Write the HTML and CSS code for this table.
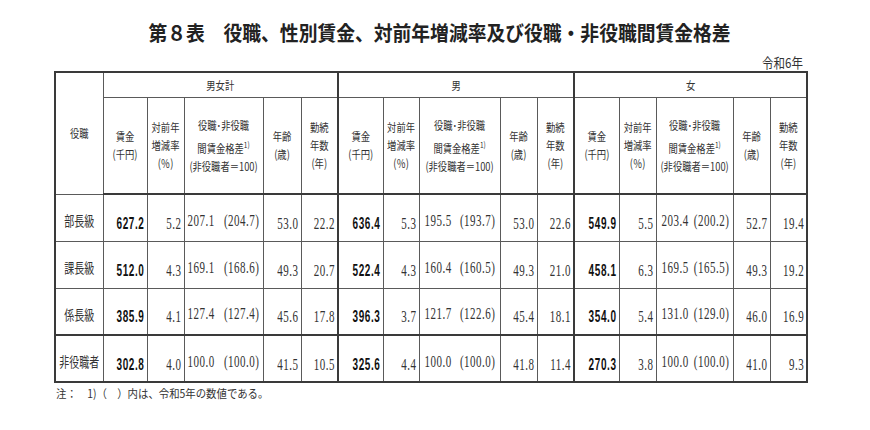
FILE: index.html
```
<!DOCTYPE html>
<html lang="ja">
<head>
<meta charset="utf-8">
<title>第８表</title>
<link rel="stylesheet" href="styles.css">
</head>
<body>
<div class="page">
  <h1 class="title"><span class="tt">第８表　役職、性別賃金、対前年増減率及び役職・非役職間賃金格差</span></h1>
  <div class="year"><span class="ys">令和6年</span></div>
  <table class="tbl">
    <colgroup>
      <col class="w48">
      <col class="w44"><col class="w37"><col class="w79"><col class="w38"><col class="w37">
      <col class="w45"><col class="w36"><col class="w81"><col class="w37"><col class="w37">
      <col class="w45"><col class="w37"><col class="w77"><col class="w37"><col class="w37">
    </colgroup>
    <thead>
      <tr class="h1">
        <th rowspan="2" class="lab"><span class="hs"><span class="ln">役職</span></span></th>
        <th colspan="5" class="grp"><span class="hs"><span class="ln">男女計</span></span></th>
        <th colspan="5" class="grp g"><span class="hs"><span class="ln">男</span></span></th>
        <th colspan="5" class="grp g"><span class="hs"><span class="ln">女</span></span></th>
      </tr>
      <tr class="h2">
        <th><span class="hs"><span class="ln">賃金</span><span class="ln">(千円)</span></span></th>
        <th><span class="hs"><span class="ln">対前年</span><span class="ln">増減率</span><span class="ln">(％)</span></span></th>
        <th><span class="hs"><span class="ln">役職･非役職</span><span class="ln l2">間賃金格差<sup>1)</sup></span><span class="ln">(非役職者＝100)</span></span></th>
        <th><span class="hs"><span class="ln">年齢</span><span class="ln">(歳)</span></span></th>
        <th><span class="hs"><span class="ln">勤続</span><span class="ln">年数</span><span class="ln">(年)</span></span></th>
        <th class="g"><span class="hs"><span class="ln">賃金</span><span class="ln">(千円)</span></span></th>
        <th><span class="hs"><span class="ln">対前年</span><span class="ln">増減率</span><span class="ln">(％)</span></span></th>
        <th><span class="hs"><span class="ln">役職･非役職</span><span class="ln l2">間賃金格差<sup>1)</sup></span><span class="ln">(非役職者＝100)</span></span></th>
        <th><span class="hs"><span class="ln">年齢</span><span class="ln">(歳)</span></span></th>
        <th><span class="hs"><span class="ln">勤続</span><span class="ln">年数</span><span class="ln">(年)</span></span></th>
        <th class="g"><span class="hs"><span class="ln">賃金</span><span class="ln">(千円)</span></span></th>
        <th><span class="hs"><span class="ln">対前年</span><span class="ln">増減率</span><span class="ln">(％)</span></span></th>
        <th><span class="hs"><span class="ln">役職･非役職</span><span class="ln l2">間賃金格差<sup>1)</sup></span><span class="ln">(非役職者＝100)</span></span></th>
        <th><span class="hs"><span class="ln">年齢</span><span class="ln">(歳)</span></span></th>
        <th><span class="hs"><span class="ln">勤続</span><span class="ln">年数</span><span class="ln">(年)</span></span></th>
      </tr>
    </thead>
    <tbody>
      <tr class="r">
        <td class="rl"><span class="ls">部長級</span></td>
        <td class="num"><span class="b">627.2</span></td>
        <td class="num"><span class="n">5.2</span></td>
        <td class="pc"><div class="pair"><span class="n">207.1</span><span class="n">(204.7)</span></div></td>
        <td class="num"><span class="n">53.0</span></td>
        <td class="num"><span class="n">22.2</span></td>
        <td class="num g"><span class="b">636.4</span></td>
        <td class="num"><span class="n">5.3</span></td>
        <td class="pc"><div class="pair m"><span class="n">195.5</span><span class="n">(193.7)</span></div></td>
        <td class="num"><span class="n">53.0</span></td>
        <td class="num"><span class="n">22.6</span></td>
        <td class="num g"><span class="b">549.9</span></td>
        <td class="num"><span class="n">5.5</span></td>
        <td class="pc"><div class="pair f"><span class="n">203.4</span><span class="n">(200.2)</span></div></td>
        <td class="num"><span class="n">52.7</span></td>
        <td class="num"><span class="n">19.4</span></td>
      </tr>
      <tr class="r">
        <td class="rl"><span class="ls">課長級</span></td>
        <td class="num"><span class="b">512.0</span></td>
        <td class="num"><span class="n">4.3</span></td>
        <td class="pc"><div class="pair"><span class="n">169.1</span><span class="n">(168.6)</span></div></td>
        <td class="num"><span class="n">49.3</span></td>
        <td class="num"><span class="n">20.7</span></td>
        <td class="num g"><span class="b">522.4</span></td>
        <td class="num"><span class="n">4.3</span></td>
        <td class="pc"><div class="pair m"><span class="n">160.4</span><span class="n">(160.5)</span></div></td>
        <td class="num"><span class="n">49.3</span></td>
        <td class="num"><span class="n">21.0</span></td>
        <td class="num g"><span class="b">458.1</span></td>
        <td class="num"><span class="n">6.3</span></td>
        <td class="pc"><div class="pair f"><span class="n">169.5</span><span class="n">(165.5)</span></div></td>
        <td class="num"><span class="n">49.3</span></td>
        <td class="num"><span class="n">19.2</span></td>
      </tr>
      <tr class="r">
        <td class="rl"><span class="ls">係長級</span></td>
        <td class="num"><span class="b">385.9</span></td>
        <td class="num"><span class="n">4.1</span></td>
        <td class="pc"><div class="pair"><span class="n">127.4</span><span class="n">(127.4)</span></div></td>
        <td class="num"><span class="n">45.6</span></td>
        <td class="num"><span class="n">17.8</span></td>
        <td class="num g"><span class="b">396.3</span></td>
        <td class="num"><span class="n">3.7</span></td>
        <td class="pc"><div class="pair m"><span class="n">121.7</span><span class="n">(122.6)</span></div></td>
        <td class="num"><span class="n">45.4</span></td>
        <td class="num"><span class="n">18.1</span></td>
        <td class="num g"><span class="b">354.0</span></td>
        <td class="num"><span class="n">5.4</span></td>
        <td class="pc"><div class="pair f"><span class="n">131.0</span><span class="n">(129.0)</span></div></td>
        <td class="num"><span class="n">46.0</span></td>
        <td class="num"><span class="n">16.9</span></td>
      </tr>
      <tr class="r last">
        <td class="rl"><span class="ls">非役職者</span></td>
        <td class="num"><span class="b">302.8</span></td>
        <td class="num"><span class="n">4.0</span></td>
        <td class="pc"><div class="pair"><span class="n">100.0</span><span class="n">(100.0)</span></div></td>
        <td class="num"><span class="n">41.5</span></td>
        <td class="num"><span class="n">10.5</span></td>
        <td class="num g"><span class="b">325.6</span></td>
        <td class="num"><span class="n">4.4</span></td>
        <td class="pc"><div class="pair m"><span class="n">100.0</span><span class="n">(100.0)</span></div></td>
        <td class="num"><span class="n">41.8</span></td>
        <td class="num"><span class="n">11.4</span></td>
        <td class="num g"><span class="b">270.3</span></td>
        <td class="num"><span class="n">3.8</span></td>
        <td class="pc"><div class="pair f"><span class="n">100.0</span><span class="n">(100.0)</span></div></td>
        <td class="num"><span class="n">41.0</span></td>
        <td class="num"><span class="n">9.3</span></td>
      </tr>
    </tbody>
  </table>
  <p class="note"><span class="ns">注：　1)（　）内は、令和5年の数値である。</span></p>
</div>
</body>
</html>
```
FILE: styles.css
```
html, body {
  margin: 0;
  padding: 0;
  background: #ffffff;
}

body {
  color: #333333;
  font-family: "Noto Sans CJK JP", "Noto Sans", sans-serif;
}

.page {
  width: 752px;
  padding: 20px 0 0 54px;
}

.title {
  margin: 0;
  height: 24px;
  line-height: 24px;
  padding-left: 19px;
  text-align: center;
  font-size: 18.8px;
  font-weight: bold;
  color: #222222;
  white-space: nowrap;
}

.tt {
  display: inline-block;
  transform: scaleY(1.1);
}

.year {
  margin-top: 10px;
  height: 16px;
  line-height: 16px;
  padding-right: 3px;
  text-align: right;
  font-size: 11.5px;
  color: #333333;
}

.ys {
  display: inline-block;
  transform: scaleY(1.15);
}

.tbl {
  margin-top: 1px;
  width: 752px;
  border-collapse: collapse;
  table-layout: fixed;
  border: 2px solid #3a3a3a;
}

.w48 { width: 48px; }
.w44 { width: 44px; }
.w45 { width: 45px; }
.w36 { width: 36px; }
.w37 { width: 37px; }
.w38 { width: 38px; }
.w77 { width: 77px; }
.w79 { width: 79px; }
.w81 { width: 81px; }

.tbl th,
.tbl td {
  border: 1px solid #5a5a5a;
  padding: 0;
  font-weight: normal;
  white-space: nowrap;
  overflow: visible;
}

.tbl th.g,
.tbl td.g {
  border-left: 2px solid #3a3a3a;
}

.h1 {
  height: 25px;
}

.h2 {
  height: 97px;
}

.h2 th {
  border-bottom: 2px solid #3a3a3a;
}

.lab {
  border-bottom: 2px solid #3a3a3a;
}

.tbl th {
  text-align: center;
  vertical-align: middle;
  font-size: 9.3px;
  color: #333333;
}

.hs {
  display: inline-block;
}

.ln {
  display: block;
  line-height: 18px;
  transform: scaleY(1.25);
}

.l2 {
  margin-top: 5px;
}

.hs sup {
  font-size: 6.5px;
  line-height: 0;
  vertical-align: 4px;
}

.r {
  height: 47px;
}

.last td {
  border-top: 2px solid #3a3a3a;
}

.tbl td {
  vertical-align: middle;
  padding-top: 4px;
}

.rl {
  text-align: center;
  font-size: 10px;
  color: #333333;
}

.ls {
  display: inline-block;
  transform: scaleY(1.42);
}

.num {
  text-align: right;
}

.tbl td.num {
  padding-right: 2px;
}

.n {
  display: inline-block;
  font-family: "Liberation Serif", "Times New Roman", serif;
  font-size: 11px;
  letter-spacing: 0.5px;
  color: #333333;
  transform: scaleY(1.6);
}

.b {
  display: inline-block;
  font-family: "Liberation Sans", Arial, sans-serif;
  font-weight: bold;
  font-size: 10px;
  letter-spacing: 0.6px;
  color: #111111;
  transform: scaleY(1.65);
}

.pair {
  display: flex;
  justify-content: space-between;
  padding: 0 3px 0 3px;
}

.pair.m {
  padding: 0 4px 0 5px;
}

.pair.f {
  justify-content: flex-start;
  gap: 5px;
  padding: 0 3px 0 5px;
}

.note {
  margin: 4px 0 0 0;
  padding-left: 2px;
  height: 14px;
  line-height: 14px;
  font-size: 10.4px;
  color: #333333;
  white-space: nowrap;
}

.ns {
  display: inline-block;
  transform: scaleY(1.1);
}
```
